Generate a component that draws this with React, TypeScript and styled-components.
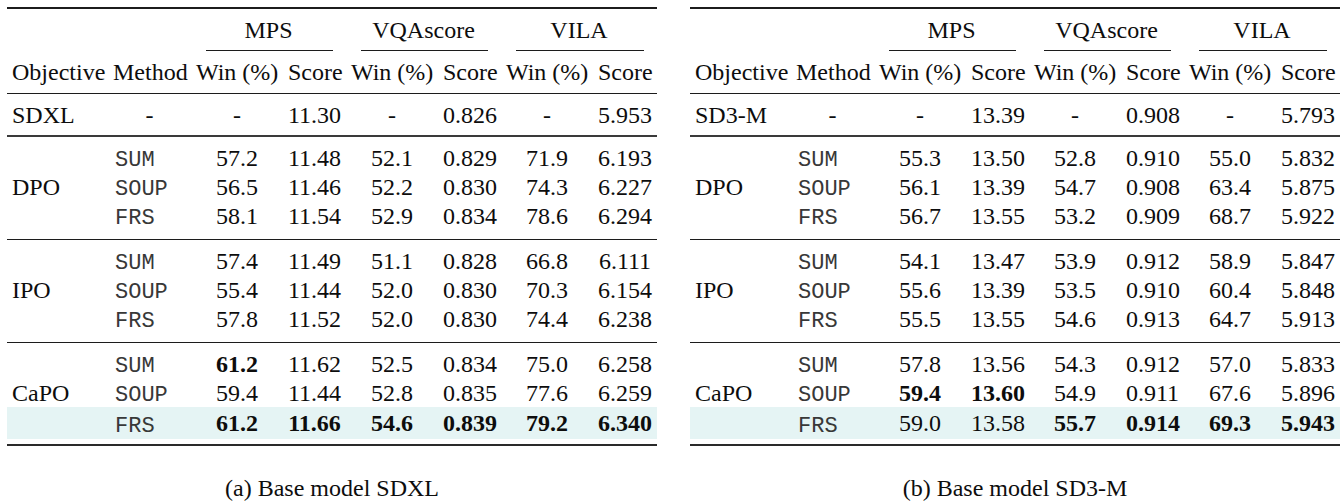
import styled, { createGlobalStyle } from "styled-components";

const GlobalStyle = createGlobalStyle`
  html, body {
    margin: 0;
    padding: 0;
    background: #fff;
  }
`;

// column template shared by every row of a table
const COLS = "101px 83px 92px 63px 92px 63px 92px 64px";

type Val = string | [string, boolean];

type MethodRow = {
  method: string;
  values: Val[];
  highlight?: boolean;
};

type Group = {
  objective: string;
  rows: MethodRow[];
};

type TableData = {
  base: string;
  baseValues: string[];
  groups: Group[];
  caption: string;
};

const b = (v: string): Val => [v, true];

const tables: TableData[] = [
  {
    base: "SDXL",
    baseValues: ["-", "11.30", "-", "0.826", "-", "5.953"],
    caption: "(a) Base model SDXL",
    groups: [
      {
        objective: "DPO",
        rows: [
          { method: "SUM", values: ["57.2", "11.48", "52.1", "0.829", "71.9", "6.193"] },
          { method: "SOUP", values: ["56.5", "11.46", "52.2", "0.830", "74.3", "6.227"] },
          { method: "FRS", values: ["58.1", "11.54", "52.9", "0.834", "78.6", "6.294"] },
        ],
      },
      {
        objective: "IPO",
        rows: [
          { method: "SUM", values: ["57.4", "11.49", "51.1", "0.828", "66.8", "6.111"] },
          { method: "SOUP", values: ["55.4", "11.44", "52.0", "0.830", "70.3", "6.154"] },
          { method: "FRS", values: ["57.8", "11.52", "52.0", "0.830", "74.4", "6.238"] },
        ],
      },
      {
        objective: "CaPO",
        rows: [
          { method: "SUM", values: [b("61.2"), "11.62", "52.5", "0.834", "75.0", "6.258"] },
          { method: "SOUP", values: ["59.4", "11.44", "52.8", "0.835", "77.6", "6.259"] },
          {
            method: "FRS",
            highlight: true,
            values: [b("61.2"), b("11.66"), b("54.6"), b("0.839"), b("79.2"), b("6.340")],
          },
        ],
      },
    ],
  },
  {
    base: "SD3-M",
    baseValues: ["-", "13.39", "-", "0.908", "-", "5.793"],
    caption: "(b) Base model SD3-M",
    groups: [
      {
        objective: "DPO",
        rows: [
          { method: "SUM", values: ["55.3", "13.50", "52.8", "0.910", "55.0", "5.832"] },
          { method: "SOUP", values: ["56.1", "13.39", "54.7", "0.908", "63.4", "5.875"] },
          { method: "FRS", values: ["56.7", "13.55", "53.2", "0.909", "68.7", "5.922"] },
        ],
      },
      {
        objective: "IPO",
        rows: [
          { method: "SUM", values: ["54.1", "13.47", "53.9", "0.912", "58.9", "5.847"] },
          { method: "SOUP", values: ["55.6", "13.39", "53.5", "0.910", "60.4", "5.848"] },
          { method: "FRS", values: ["55.5", "13.55", "54.6", "0.913", "64.7", "5.913"] },
        ],
      },
      {
        objective: "CaPO",
        rows: [
          { method: "SUM", values: ["57.8", "13.56", "54.3", "0.912", "57.0", "5.833"] },
          { method: "SOUP", values: [b("59.4"), b("13.60"), "54.9", "0.911", "67.6", "5.896"] },
          {
            method: "FRS",
            highlight: true,
            values: ["59.0", "13.58", b("55.7"), b("0.914"), b("69.3"), b("5.943")],
          },
        ],
      },
    ],
  },
];

const metrics = ["MPS", "VQAscore", "VILA"];

export default function App() {
  return (
    <>
      <GlobalStyle />
      <Page>
        {tables.map((t) => (
          <Figure key={t.base}>
            <Table>
              <HeadTop>
                <Blank />
                {metrics.map((m) => (
                  <MetricHead key={m}>
                    <MetricLabel>{m}</MetricLabel>
                    <CmidRule />
                  </MetricHead>
                ))}
              </HeadTop>
              <HeadBottom>
                <Cell>Objective</Cell>
                <Cell>Method</Cell>
                {metrics.map((m) => (
                  <Pair key={m}>
                    <Cell $center>Win (%)</Cell>
                    <Cell $center>Score</Cell>
                  </Pair>
                ))}
              </HeadBottom>
              <BaseRow>
                <Cell>{t.base}</Cell>
                <Cell $center>-</Cell>
                {t.baseValues.map((v, i) => (
                  <Cell key={i} $center>
                    {v}
                  </Cell>
                ))}
              </BaseRow>
              {t.groups.map((g, gi) => (
                <GroupBlock key={g.objective} $last={gi === t.groups.length - 1}>
                  {g.rows.map((r, ri) => (
                    <DataRow key={r.method} $highlight={r.highlight}>
                      <Cell>{ri === 1 ? g.objective : ""}</Cell>
                      <MethodCell>{r.method}</MethodCell>
                      {r.values.map((v, vi) => {
                        const [text, bold] = Array.isArray(v) ? v : [v, false];
                        return (
                          <Cell key={vi} $center $bold={bold}>
                            {text}
                          </Cell>
                        );
                      })}
                    </DataRow>
                  ))}
                </GroupBlock>
              ))}
            </Table>
            <Caption>{t.caption}</Caption>
          </Figure>
        ))}
      </Page>
    </>
  );
}

const Page = styled.div`
  display: flex;
  align-items: flex-start;
  gap: 33px;
  padding: 7px 0 0 7px;
  font-family: "Liberation Serif", "Times New Roman", serif;
  font-size: 24px;
  color: #0d0d0d;
`;

const Figure = styled.div`
  width: 650px;
  display: flex;
  flex-direction: column;
`;

const Table = styled.div`
  border-top: 2px solid #1c1c1c;
  border-bottom: 2px solid #2a2a2a;
`;

const GridRow = styled.div`
  display: grid;
  grid-template-columns: ${COLS};
  align-items: center;
`;

const HeadTop = styled(GridRow)`
  height: 42px;
  align-items: stretch;
`;

const Blank = styled.div`
  grid-column: 1 / span 2;
`;

const MetricHead = styled.div`
  grid-column: span 2;
  display: flex;
  flex-direction: column;
`;

const MetricLabel = styled.div`
  flex: 1;
  display: flex;
  align-items: center;
  justify-content: center;
  line-height: 1;
`;

const CmidRule = styled.div`
  height: 1px;
  background: #1c1c1c;
  margin: 0 13px 0 15px;
`;

const HeadBottom = styled(GridRow)`
  height: 42px;
  border-bottom: 1px solid #1c1c1c;
`;

const Pair = styled.div`
  display: contents;
`;

const BaseRow = styled(GridRow)`
  height: 41px;
  border-bottom: 2px solid #3a3a3a;
`;

const GroupBlock = styled.div<{ $last?: boolean }>`
  padding: 6px 0 ${(p) => (p.$last ? "5px" : "9px")};
  border-bottom: ${(p) => (p.$last ? "none" : "1px solid #1c1c1c")};
`;

const DataRow = styled(GridRow)<{ $highlight?: boolean }>`
  height: ${(p) => (p.$highlight ? "32px" : "29px")};
  background: ${(p) => (p.$highlight ? "#e5f4f4" : "transparent")};
`;

const Cell = styled.div<{ $center?: boolean; $bold?: boolean }>`
  padding: 0 5px;
  white-space: nowrap;
  line-height: 1;
  text-align: ${(p) => (p.$center ? "center" : "left")};
  font-weight: ${(p) => (p.$bold ? 700 : 400)};
`;

const MethodCell = styled.div`
  padding: 7px 0 0 7px;
  font-family: "Liberation Mono", "Courier New", monospace;
  font-size: 22px;
  line-height: 1;
  color: #383838;
`;

const Caption = styled.div`
  margin-top: 28px;
  line-height: 28px;
  text-align: center;
`;
